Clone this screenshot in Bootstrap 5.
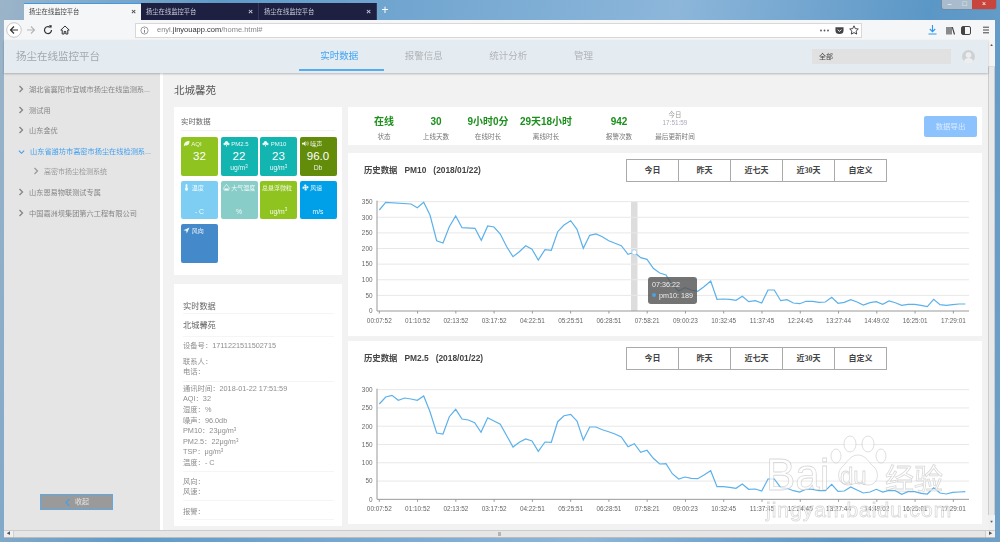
<!DOCTYPE html>
<html lang="zh-CN">
<head>
<meta charset="utf-8">
<title>扬尘在线监控平台</title>
<link rel="stylesheet" href="https://cdn.jsdelivr.net/npm/bootstrap@5.3.0/dist/css/bootstrap.min.css">
<style>
html,body{height:542px;overflow:hidden}
body{width:1000px;font-family:"Liberation Sans","Noto Sans CJK SC",sans-serif;color:#666;background:linear-gradient(100deg,#9cb4c8 0,#5f9bc9 20%,#8db6da 62%,#5b97c6 85%,#6fa0c8 100%)}
.soft-wrap{filter:blur(.35px)}
.win-top{height:20px;padding-left:24px}
.br-tab{width:118px;height:17px;margin-top:3px;font-size:6.3px;padding:0 5px;color:#c8cbd8;background:#1e2042;border-right:1px solid #34375a}
.br-tab.on{color:#444;background:#f5f6f7;border-top:1px solid #3d9ae8;border-right:0;width:117px}
.br-tab .x{font-size:8px;font-weight:700;line-height:1}
.br-plus{width:16px;margin-top:3px;color:#fff;font-size:12px;line-height:14px;text-align:center}
.win-ctl{margin-left:auto;margin-right:3px;height:10px;border:1px solid #6f8ba5;border-top:0;border-radius:0 0 3px 3px;overflow:hidden}
.win-ctl span{display:block;height:9px;width:15px;background:#a9bccd;color:#fff;font-size:7px;line-height:8px;text-align:center}
.win-ctl span.cl{width:24px;background:#c8453e}
.br-bar{height:20px;margin:0 5px 0 4px;background:#f5f6f7;padding-left:2px}
.br-ico{display:block;flex:none}
.m-f{margin-left:4px}.m-r{margin-left:7px}
.url-box{width:727px;height:15px;margin-left:65px;background:#fff;border:1px solid #d8d8d8;font-size:7.5px;color:#888;padding:0 2px 0 4px}
.url-box b{font-weight:400;color:#333}
.m-pk{margin-left:6px}.m-st{margin-left:5.500px}
.m-dl{margin-left:65.500px}.m-lb{margin-left:9px}.m-sb{margin-left:6.500px}.m-mn{margin-left:11px}
.app-wrap{height:490px;margin:0 5px 0 4px}
.app-main{width:984px}
.top-nav{height:33px;background:#e4ebf1;box-shadow:0 1px 2px rgba(0,0,0,.25);position:relative;z-index:1;padding-left:12px}
.brand-t{font-size:10.5px;color:#a3a8ad;width:283px;margin:0;padding:0}
.top-nav .nav-link{width:84.5px;padding:0 4px 0 0;height:31px;line-height:31px;text-align:center;font-size:9.5px;color:#b0b4b8;border-bottom:2px solid transparent}
.top-nav .nav-link.short-l{width:66px}
.top-nav .nav-link.active{color:#42a5f5;border-bottom-color:#55acee}
.sel-box{width:139px;height:15px;background:#e1e1e1;font-size:7px;color:#444;line-height:15px;padding-left:7px;margin-left:auto;margin-right:11px}
.ava{margin-right:13px}
.app-body{height:457px}
.side-col{width:156px;background:#e5e5e5;border-right:0;padding-top:7px}
.side-list{--bs-list-group-bg:transparent;--bs-list-group-border-width:0}
.side-list .list-group-item{height:20.6px;line-height:20px;padding:0 0 0 14px;font-size:7.2px;color:#858585;white-space:nowrap;background:transparent}
.side-list .list-group-item.cur{color:#3f9ff0}
.side-list .list-group-item.sub{padding-left:29px;font-size:7px;color:#9a9a9a}
.side-list svg{margin-right:5px;vertical-align:-1px}
.fold-btn{width:73px;height:16px;margin:0 0 20px 36px;background:#9a9a9a;border:1px solid #5ea8e4;border-radius:0;color:#e8e8e8;font-size:7px;padding:0;line-height:14px}
.w-strip{width:3px;background:#fff}
.cont{width:825px;background:#f2f2f2;padding:0 6px 0 11px}
.pg-title{height:34px;line-height:35px;font-size:10.5px;color:#555;margin:0;font-weight:400}
.two-col{gap:6px}
.left-col{width:168px;flex:none}
.right-col{width:634px;flex:none}
.real-card{height:168px;padding:.1px 7px 0}
.real-h{height:19px;margin:4.500px 0 7.500px;line-height:19px;font-size:7.4px;color:#666;border-bottom:1px solid #f2f2f2}
.tile-grid{display:grid;grid-template-columns:repeat(4,37px);grid-auto-rows:38.5px;gap:5px 2.5px;margin-top:-1px}
.tile{border-radius:2px;color:#fff;text-align:center;position:relative}
.tile-l{font-size:6px;text-align:left;padding:3px 0 0 2px;line-height:8px;white-space:nowrap;height:13px;opacity:.9}
.tile-l svg{vertical-align:-1px;margin-right:0}
.tile-v{font-size:11.5px;line-height:13px;height:13px}
.tile-u{font-size:6.8px;line-height:10px;opacity:.9}
.tile-u sup{font-size:4.5px}
.c-g{background:#8fc31f}.c-t{background:#13b5b1}.c-dg{background:#638c0b}.c-lb{background:#7ecef4}.c-lt{background:#89cdc9}.c-b{background:#00a0e9}.c-db{background:#448aca}
.info-card{height:242px;margin-top:9px;padding:0 8px 0 9px;font-size:7.3px;color:#8e8e8e;line-height:10.6px}
.info-h{height:30px;padding-top:15px;line-height:16px;font-size:8.2px;color:#666;border-bottom:1px solid #f5f5f5}
.info-n{height:23px;line-height:23px;font-size:8.2px;color:#666;border-bottom:1px solid #f5f5f5}
.info-s{padding:2px 0 3px;border-bottom:1px solid #f5f5f5}
.info-s.first{padding-top:4px;border:0}
.info-s.lng{padding-bottom:2px}
.info-s.gap{padding:5px 0 2px}
.info-s.gap2{padding:6px 0 2px}
.info-s p{margin:0;white-space:nowrap}
.info-s sup{font-size:4.5px;line-height:0}
.stat-card{height:38px;padding-left:10px}
.st{width:52px;text-align:center;white-space:nowrap;display:flex;flex-direction:column;align-items:center}
.st-b{width:64px}.st-c{width:54px;margin-left:14px}.st-d{width:54px;margin-left:2px}
.st-v{height:21px;line-height:22px;font-size:10px;font-weight:700;color:#1c8f1c}
.st-l{height:10px;line-height:10px;font-size:6.6px;color:#777}
.st-t{height:8px;line-height:8px;font-size:6.4px;color:#999}
.st-t.hi{color:#aab;margin-bottom:5px}
.exp-btn{width:53px;height:21px;padding:0;margin-left:auto;margin-right:5px;font-size:7.4px;line-height:21px;color:#dbeaff;background:#8cc3ff;border:0;border-radius:2px}
.chart-card{height:183px;margin-top:8px;position:relative}
.chart-card.next{margin-top:5px}
.chart-head{height:37px;padding:6px 0 0 16px}
.chart-t{width:262px;line-height:23px;font-size:8.4px;font-weight:700;color:#444;white-space:pre}
.rng .btn{width:53px;height:23px;padding:0;font-size:8px;font-weight:700;color:#444;background:#fff;border:1px solid #aaa;border-radius:0;line-height:21px;font-family:"Liberation Serif","Noto Sans CJK SC",serif}
.chart-sv{display:block}
.ax{font-size:6.4px;fill:#666;font-family:"Liberation Sans",sans-serif}
.tipb{position:absolute;left:300px;top:124px;width:49px;height:27px;border-radius:3px;background:rgba(85,85,85,.82);color:#eee;font-size:7.2px;line-height:10.5px;padding:3px 0 0 4px;white-space:nowrap}
.tipb i{display:inline-block;width:4px;height:4px;border-radius:50%;background:#4aa3df;margin-right:3px;vertical-align:1px}
.wm{position:absolute;left:0;top:0;pointer-events:none}
.wm text{fill:rgba(255,255,255,.66);stroke:rgba(165,165,165,.42);stroke-width:.8px;font-family:"Liberation Sans","Noto Sans CJK SC",sans-serif}
.vsb{width:7px;background:#eff0f1;position:relative}
.vsb-u{height:27px;background:#f4f4f4;border-bottom:1px solid #ddd;color:#555;font-size:4px;text-align:center;line-height:10px}
.vsb-t{height:448px;background:#e9e9e9;border:1px solid #ccc;border-width:0 1px}
.vsb-d{color:#555;font-size:4px;text-align:center;line-height:14px}
.hsb{height:8px;margin:0 5px 0 4px;background:#f0f0f0;border-top:1px solid #ccc;border-bottom:1px solid #bbb;font-size:4px;line-height:6px;color:#555;text-align:center}
.hsb-a{width:9px;flex:none}
.hsb-t{flex:1;background:#e6e6e6;border:1px solid #d0d0d0;border-width:0 1px;line-height:5px}
</style>
</head>
<body>
<svg width="0" height="0" class="position-absolute">
  <symbol id="chv" viewBox="0 0 6 8"><path d="M1.5 1l3 3-3 3" fill="none" stroke="currentColor" stroke-width="1.3"/></symbol>
  <symbol id="chd" viewBox="0 0 8 6"><path d="M1 1.5l3 3 3-3" fill="none" stroke="currentColor" stroke-width="1.3"/></symbol>
  <symbol id="leaf" viewBox="0 0 8 8"><path d="M1 7C1 3 3 1 7.500 1 7.500 5 5 7 2.500 6L1 7.500z" fill="#fff"/></symbol>
  <symbol id="cld" viewBox="0 0 8 8"><circle cx="4" cy="3" r="2" fill="#fff"/><circle cx="2" cy="4.500" r="1.500" fill="#fff"/><circle cx="6" cy="4.500" r="1.500" fill="#fff"/><path d="M4 5v2.500" stroke="#fff"/></symbol>
  <symbol id="spk" viewBox="0 0 8 8"><path d="M0 3h2l2-2v6L2 5H0z" fill="#fff"/><path d="M5.200 2.500q1 1.500 0 3M6.500 1.500q1.600 2.500 0 5" fill="none" stroke="#fff" stroke-width=".7"/></symbol>
  <symbol id="thm" viewBox="0 0 8 8"><path d="M3 1a1 1 0 0 1 2 0v3.500a1.700 1.700 0 1 1-2 0z" fill="#fff"/></symbol>
  <symbol id="drp" viewBox="0 0 8 8"><path d="M4 .5C6 3 7.200 4 7.200 5.200A3.200 2.700 0 0 1 .8 5.200C.8 4 2 3 4 .5z" fill="none" stroke="#fff" stroke-width=".8"/><path d="M1.500 5h5a2.500 2 0 0 1-5 0z" fill="#fff"/></symbol>
  <symbol id="fan" viewBox="0 0 8 8"><circle cx="4" cy="4" r=".8" fill="#fff"/><path d="M4 3.500C2 3 2 .5 3.500.5S6 2 4 3.500zM4.500 4C5 2 7.500 2 7.500 3.500S6 6 4.500 4zM4 4.500C6 5 6 7.500 4.500 7.500S2 6 4 4.500zM3.500 4C3 6 .5 6 .5 4.500S2 2 3.500 4z" fill="#fff"/></symbol>
  <symbol id="arw" viewBox="0 0 8 8"><path d="M7.500.5L.5 3.800l3.200.6.6 3.100z" fill="#fff"/></symbol>
</svg>

<div class="soft-wrap">
<div class="d-flex align-items-start win-top">
  <div class="br-tab on d-flex align-items-center justify-content-between"><span>扬尘在线监控平台</span><span class="x">×</span></div>
  <div class="br-tab d-flex align-items-center justify-content-between"><span>扬尘在线监控平台</span><span class="x">×</span></div>
  <div class="br-tab d-flex align-items-center justify-content-between"><span>扬尘在线监控平台</span><span class="x">×</span></div>
  <div class="br-plus">+</div>
  <div class="win-ctl d-flex"><span>–</span><span>□</span><span class="cl">×</span></div>
</div>

<div class="br-bar d-flex align-items-center">
  <svg class="br-ico" width="16" height="16" viewBox="0 0 16 16"><circle cx="8" cy="8" r="7.300" fill="#fff" stroke="#bbb" stroke-width=".8"/><path d="M12 8H4.500M8 4.500L4.500 8 8 11.500" fill="none" stroke="#333" stroke-width="1.200"/></svg>
  <svg class="br-ico m-f" width="10" height="10" viewBox="0 0 10 10"><path d="M9 5H1.500M5 1.500L1.500 5 5 8.500" transform="rotate(180 5 5)" fill="none" stroke="#b5b5b5" stroke-width="1.100"/></svg>
  <svg class="br-ico m-r" width="10" height="10" viewBox="0 0 10 10"><path d="M8.500 5A3.500 3.500 0 1 1 7 2.200" fill="none" stroke="#333" stroke-width="1.200"/><path d="M6 0l3 .5L8 3.500z" fill="#333"/></svg>
  <svg class="br-ico m-r" width="10" height="10" viewBox="0 0 10 10"><path d="M5 1L.8 5h1.400v4h2V6.500h1.600V9h2V5h1.400z" fill="none" stroke="#333" stroke-width="1"/></svg>
  <div class="url-box d-flex align-items-center">
    <svg class="br-ico me-1" width="9" height="9" viewBox="0 0 10 10"><circle cx="5" cy="5" r="4" fill="none" stroke="#777" stroke-width=".8"/><path d="M5 4.500v3M5 2.500v1" stroke="#777"/></svg>
    <span class="ms-1">enyl.<b>jinyouapp.com</b>/home.html#</span>
    <svg class="br-ico ms-auto" width="9" height="3" viewBox="0 0 9 3"><g fill="#555"><circle cx="1" cy="1.500" r=".9"/><circle cx="4.500" cy="1.500" r=".9"/><circle cx="8" cy="1.500" r=".9"/></g></svg>
    <svg class="br-ico m-pk" width="9" height="9" viewBox="0 0 10 10"><path d="M.5 1.500h9V5a4.500 4 0 0 1-9 0z" fill="#444"/><path d="M3 4l2 2 2-2" fill="none" stroke="#fff" stroke-width="1.100"/></svg>
    <svg class="br-ico m-st" width="10" height="10" viewBox="0 0 10 10"><path d="M5 .8l1.300 2.800 3 .4-2.200 2.100.6 3L5 7.600 2.300 9.100l.6-3L.7 4l3-.4z" fill="none" stroke="#333" stroke-width=".9"/></svg>
  </div>
  <svg class="br-ico m-dl" width="9" height="10" viewBox="0 0 9 10"><path d="M4.500 0v6.500M1.800 4l2.700 2.700L7.200 4M.5 9h8" fill="none" stroke="#2f97f0" stroke-width="1.100"/></svg>
  <svg class="br-ico m-lb" width="9" height="9" viewBox="0 0 9 9"><path d="M1 1v7.500M3 1v7.500M5 1v7.500M6.300 1.200L8.500 8.500" stroke="#444" stroke-width="1.200" fill="none"/></svg>
  <svg class="br-ico m-sb" width="10" height="9" viewBox="0 0 10 9"><rect x=".5" y=".5" width="9" height="8" rx="1.500" fill="none" stroke="#444"/><rect x="1" y="1" width="3" height="7" fill="#444"/></svg>
  <svg class="br-ico m-mn" width="8" height="8" viewBox="0 0 8 8"><path d="M1 1.200h6M1 4h6M1 6.800h6" stroke="#444" stroke-width="1"/></svg>
</div>

<div class="d-flex app-wrap">
  <div class="app-main d-flex flex-column">
    <nav class="top-nav d-flex align-items-center">
      <div class="brand-t navbar-brand">扬尘在线监控平台</div>
      <ul class="nav align-self-start">
        <li class="nav-item"><a class="nav-link active" href="#">实时数据</a></li>
        <li class="nav-item"><a class="nav-link" href="#">报警信息</a></li>
        <li class="nav-item"><a class="nav-link" href="#">统计分析</a></li>
        <li class="nav-item"><a class="nav-link short-l" href="#">管理</a></li>
      </ul>
      <div class="sel-box">全部</div>
      <svg class="br-ico ava" width="13" height="13" viewBox="0 0 14 14"><circle cx="7" cy="7" r="7" fill="#cfd2d4"/><circle cx="7" cy="5.500" r="3" fill="#eceeef"/><path d="M2 12.500a5 4 0 0 1 10 0 7 7 0 0 1-10 0z" fill="#eceeef"/></svg>
    </nav>
    <div class="d-flex app-body">
      <aside class="side-col d-flex flex-column">
        <ul class="list-group list-group-flush side-list">
          <li class="list-group-item"><svg width="6" height="8"><use href="#chv"/></svg>湖北省襄阳市宜城市扬尘在线监测系...</li>
          <li class="list-group-item"><svg width="6" height="8"><use href="#chv"/></svg>测试用</li>
          <li class="list-group-item"><svg width="6" height="8"><use href="#chv"/></svg>山东金优</li>
          <li class="list-group-item cur"><svg width="7" height="6"><use href="#chd"/></svg>山东省潍坊市高密市扬尘在线检测系...</li>
          <li class="list-group-item sub"><svg width="6" height="8"><use href="#chv"/></svg>高密市扬尘检测系统</li>
          <li class="list-group-item"><svg width="6" height="8"><use href="#chv"/></svg>山东恩易物联测试专属</li>
          <li class="list-group-item"><svg width="6" height="8"><use href="#chv"/></svg>中国嘉洲坝集团第六工程有限公司</li>
        </ul>
        <button class="btn fold-btn mt-auto" type="button"><svg width="7" height="9" viewBox="0 0 7 9" class="me-1"><path d="M5.500 1L2 4.500 5.500 8" fill="none" stroke="#4d9fe4" stroke-width="1.400"/></svg>收起</button>
      </aside>
      <div class="w-strip"></div>
      <main class="cont">
        <h5 class="pg-title">北城馨苑</h5>
        <div class="d-flex two-col">
          <div class="left-col">
            <section class="real-card bg-white">
              <div class="real-h">实时数据</div>
              <div class="tile-grid">
                <div class="tile c-g"><div class="tile-l"><svg width="7" height="7"><use href="#leaf"/></svg> AQI</div><div class="tile-v">32</div></div>
                <div class="tile c-t"><div class="tile-l"><svg width="7" height="7"><use href="#cld"/></svg> PM2.5</div><div class="tile-v">22</div><div class="tile-u">ug/m<sup>3</sup></div></div>
                <div class="tile c-t"><div class="tile-l"><svg width="7" height="7"><use href="#cld"/></svg> PM10</div><div class="tile-v">23</div><div class="tile-u">ug/m<sup>3</sup></div></div>
                <div class="tile c-dg"><div class="tile-l"><svg width="7" height="7"><use href="#spk"/></svg> 噪声</div><div class="tile-v">96.0</div><div class="tile-u">Db</div></div>
                <div class="tile c-lb"><div class="tile-l"><svg width="7" height="7"><use href="#thm"/></svg> 温度</div><div class="tile-v"></div><div class="tile-u">- C</div></div>
                <div class="tile c-lt"><div class="tile-l"><svg width="7" height="7"><use href="#drp"/></svg> 大气湿度</div><div class="tile-v"></div><div class="tile-u">%</div></div>
                <div class="tile c-g"><div class="tile-l">总悬浮微粒</div><div class="tile-v"></div><div class="tile-u">ug/m<sup>3</sup></div></div>
                <div class="tile c-b"><div class="tile-l"><svg width="7" height="7"><use href="#fan"/></svg> 风速</div><div class="tile-v"></div><div class="tile-u">m/s</div></div>
                <div class="tile c-db"><div class="tile-l"><svg width="7" height="7"><use href="#arw"/></svg> 风向</div></div>
              </div>
            </section>
            <section class="info-card bg-white">
              <div class="info-h">实时数据</div>
              <div class="info-n">北城馨苑</div>
              <div class="info-s first"><p>设备号：1711221511502715</p></div>
              <div class="info-s"><p>联系人：</p><p>电话：</p></div>
              <div class="info-s lng"><p>通讯时间：2018-01-22 17:51:59</p><p>AQI：32</p><p>湿度：%</p><p>噪声：96.0db</p><p>PM10：23μg/m<sup>3</sup></p><p>PM2.5：22μg/m<sup>3</sup></p><p>TSP：μg/m<sup>3</sup></p><p>温度：- C</p></div>
              <div class="info-s gap"><p>风向：</p><p>风速：</p></div>
              <div class="info-s gap2"><p>报警：</p></div>
            </section>
          </div>
          <div class="right-col">
            <section class="stat-card bg-white d-flex align-items-center">
              <div class="st"><div class="st-v">在线</div><div class="st-l">状态</div></div>
              <div class="st"><div class="st-v">30</div><div class="st-l">上线天数</div></div>
              <div class="st"><div class="st-v">9小时0分</div><div class="st-l">在线时长</div></div>
              <div class="st st-b"><div class="st-v">29天18小时</div><div class="st-l">离线时长</div></div>
              <div class="st st-c"><div class="st-v">942</div><div class="st-l">报警次数</div></div>
              <div class="st st-d"><div class="st-t">今日</div><div class="st-t hi">17:51:59</div><div class="st-l">最后更新时间</div></div>
              <button class="btn exp-btn" type="button">数据导出</button>
            </section>
            <section class="chart-card bg-white">
              <div class="chart-head d-flex align-items-start">
                <div class="chart-t">历史数据   PM10   (2018/01/22)</div>
                <div class="btn-group rng" role="group"><button class="btn" type="button">今日</button><button class="btn" type="button">昨天</button><button class="btn" type="button">近七天</button><button class="btn" type="button">近30天</button><button class="btn" type="button">自定义</button></div>
              </div>
              <svg id="c1" class="chart-sv" width="634" height="146" viewBox="348 190 634 146"></svg>
              <div class="tipb">07:36:22<br><i></i>pm10: 189</div>
            </section>
            <section class="chart-card next bg-white">
              <div class="chart-head d-flex align-items-start">
                <div class="chart-t">历史数据   PM2.5   (2018/01/22)</div>
                <div class="btn-group rng" role="group"><button class="btn" type="button">今日</button><button class="btn" type="button">昨天</button><button class="btn" type="button">近七天</button><button class="btn" type="button">近30天</button><button class="btn" type="button">自定义</button></div>
              </div>
              <svg id="c2" class="chart-sv" width="634" height="146" viewBox="348 378 634 146"></svg>
              <svg class="wm" width="634" height="183" viewBox="348 341 634 183">
                <g fill="rgba(255,255,255,.55)" stroke="rgba(165,165,165,.45)" stroke-width=".8">
                  <ellipse cx="836" cy="456" rx="5" ry="7"/><ellipse cx="850" cy="444" rx="6" ry="8"/><ellipse cx="868" cy="444" rx="6" ry="8"/><ellipse cx="881" cy="456" rx="5" ry="7"/>
                  <path d="M858 455c8 0 11 8 16 12 6 6 4 18-6 18-4 0-7-2-10-2s-6 2-10 2c-10 0-12-12-6-18 5-4 8-12 16-12z"/>
                </g>
                <text x="766" y="490" font-size="44">Bai</text>
                <text x="840" y="484" font-size="24">du</text>
                <text x="885" y="490" font-size="29">经验</text>
                <text x="766" y="517" font-size="21" letter-spacing="1">jingyan.baidu.com</text>
              </svg>
            </section>
          </div>
        </div>
      </main>
    </div>
  </div>
  <div class="vsb"><div class="vsb-u">▲</div><div class="vsb-t"></div><div class="vsb-d">▼</div></div>
</div>
<div class="hsb d-flex"><div class="hsb-a">◀</div><div class="hsb-t">|||</div><div class="hsb-a">▶</div></div>
</div>

<script>
var NS='http://www.w3.org/2000/svg';
var labels=['00:07:52','01:10:52','02:13:52','03:17:52','04:22:51','05:25:51','06:28:51','07:58:21','09:00:23','10:32:45','11:37:45','12:24:45','13:27:44','14:49:02','16:25:01','17:29:01'];
var d1a=[[103,60],[122,37],[198,42],[217,53],[236,37],[255,75],[275,152],[294,159],[313,110],[332,78],[351,113],[390,115],[409,151],[428,108],[447,111],[466,132],[485,170],[504,200],[523,185],[542,167],[561,178],[580,210],[600,179],[619,181],[638,125],[657,105],[677,92],[696,118],[715,175],[734,136],[753,132],[772,140],[791,152],[810,160],[829,167],[849,193],[868,187],[887,203],[906,208],[925,235],[944,249],[963,255],[982,285]];
var d1b=[[26,303],[45,293],[64,300],[83,304],[102,290],[122,273],[141,328],[160,327],[179,328],[198,331],[217,319],[236,335],[256,332],[275,339],[294,300],[313,300],[332,332],[351,329],[370,339],[389,341],[408,334],[428,334],[447,337],[466,336],[485,322],[504,340],[523,337],[542,329],[561,336],[580,345],[600,338],[619,335],[638,343],[657,333],[676,338],[695,346],[714,343],[734,343],[753,346],[772,350],[791,328],[810,344],[829,346],[848,344],[867,342],[886,342]];
var d2a=[[103,87],[122,66],[141,61],[160,76],[179,69],[198,72],[217,76],[236,63],[255,110],[275,174],[294,177],[313,125],[332,103],[351,132],[370,135],[389,143],[408,172],[428,128],[447,138],[466,148],[485,182],[504,216],[523,202],[542,192],[561,198],[580,229],[600,201],[619,202],[638,140],[657,122],[677,118],[696,138],[715,195],[734,156],[753,156],[772,164],[791,170],[810,177],[829,186],[849,215],[868,206],[887,232],[906,226],[925,250],[944,267],[963,266],[982,296]];
var d2b=[[26,312],[45,306],[64,310],[83,311],[102,300],[122,287],[141,335],[160,335],[179,337],[198,340],[217,327],[236,343],[256,342],[275,348],[294,312],[313,312],[332,338],[351,340],[370,347],[389,351],[408,342],[428,343],[447,347],[466,347],[485,328],[504,349],[523,348],[542,336],[561,345],[580,354],[600,351],[619,343],[638,351],[657,346],[676,347],[695,358],[714,350],[734,350],[753,355],[772,357],[791,338],[810,354],[829,357],[848,352],[867,351],[886,350]];
function el(p,n,a,t){var e=document.createElementNS(NS,n);for(var k in a)e.setAttribute(k,a[k]);if(t)e.textContent=t;p.appendChild(e);return e}
function draw(id,a,b,topZ,y0Z,yBase,maxV,labelY,band){
  var s=document.getElementById(id),y0=yBase+y0Z/3,yt=yBase+topZ/3,n=maxV/50,i;
  if(band){el(s,'rect',{x:631,y:yt,width:6.500,height:y0-yt,fill:'#dddddd'})}
  for(i=1;i<=n;i++){var y=y0-(y0-yt)*i/n;el(s,'line',{x1:377,x2:969,y1:y,y2:y,stroke:'#e8e8e8','stroke-width':1})}
  for(i=0;i<=n;i++){var y2=y0-(y0-yt)*i/n;el(s,'text',{x:372.500,y:y2+2.300,'text-anchor':'end','class':'ax'},String(i*50))}
  el(s,'line',{x1:377,x2:377,y1:yt-1,y2:y0,stroke:'#999'});
  el(s,'line',{x1:377,x2:969,y1:y0,y2:y0,stroke:'#999'});
  labels.forEach(function(t,i){var x=379.300+i*38.270;el(s,'line',{x1:x,x2:x,y1:y0,y2:y0+2.500,stroke:'#999'});el(s,'text',{x:x,y:labelY,'text-anchor':'middle','class':'ax'},t)});
  var pts=a.map(function(p){return (345+p[0]/3).toFixed(1)+','+(yBase+p[1]/3).toFixed(1)}).concat(b.map(function(p){return (670+p[0]/3).toFixed(1)+','+(yBase+p[1]/3).toFixed(1)})).join(' ');
  el(s,'polyline',{points:pts,fill:'none',stroke:'#5cb1ea','stroke-width':1.200});
  if(band){el(s,'circle',{cx:634.300,cy:252.300,r:2.500,fill:'#fff',stroke:'#9fcdec','stroke-width':.8})}
}
draw('c1',d1a,d1b,35,363,190,350,323.300,true);
draw('c2',d2a,d2b,44,373,375,300,511.300,false);
</script>
</body>
</html>
